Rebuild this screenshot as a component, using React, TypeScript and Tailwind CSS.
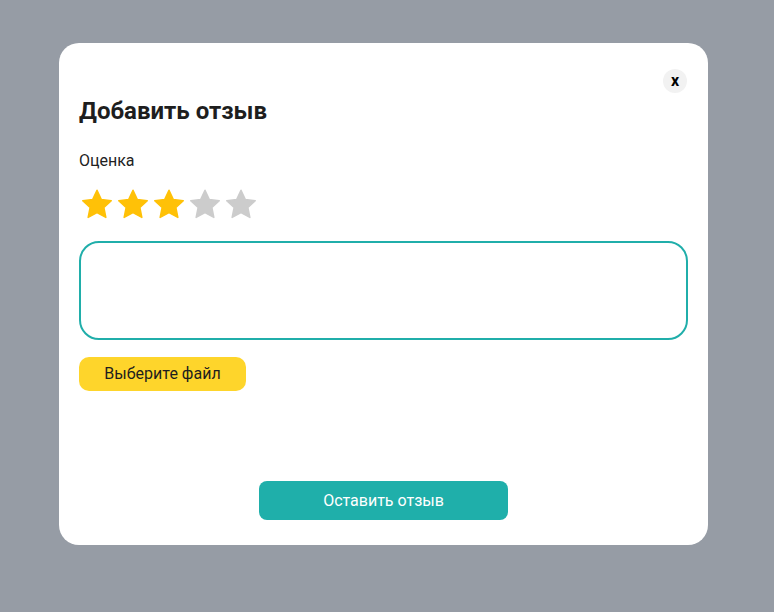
import React from "react";

const Star = ({ filled }: { filled: boolean }) => (
  <svg width="36" height="36" viewBox="0 0 24 24">
    <path
      d="M12 2.2l2.9 6.1 6.6.8-4.9 4.6 1.3 6.6L12 17.1l-5.9 3.2 1.3-6.6-4.9-4.6 6.6-.8z"
      fill={filled ? "#ffc107" : "#cccccc"}
      stroke={filled ? "#ffc107" : "#cccccc"}
      strokeWidth="1"
      strokeLinejoin="round"
    />
  </svg>
);

export default function App() {
  return (
    <div
      className="w-[774px] h-[612px] bg-[#969ca5] pl-[59px] pt-[43px]"
      style={{ fontFamily: "Roboto, 'Noto Sans', sans-serif" }}
    >
      <div className="relative w-[649px] h-[502px] bg-white rounded-[20px] px-[20px] pt-[52px] pb-[25px] flex flex-col">
        <button className="absolute top-[26px] right-[21px] w-[24px] h-[24px] rounded-full bg-[#f2f2f2] flex items-center justify-center text-[16px] font-bold text-black leading-none pb-[1px]">
          x
        </button>
        <h2 className="text-[24px] leading-[32px] font-bold text-[#1e1e1e]">Добавить отзыв</h2>
        <div className="mt-[22px] text-[16px] leading-[24px] text-[#222]">Оценка</div>
        <div className="mt-[14px] flex h-[36px]">
          <Star filled />
          <Star filled />
          <Star filled />
          <Star filled={false} />
          <Star filled={false} />
        </div>
        <textarea className="mt-[18px] h-[99px] w-full rounded-[20px] border-2 border-[#20aeaa] resize-none outline-none" />
        <button className="mt-[17px] w-[167px] h-[34px] rounded-[10px] bg-[#fed52b] text-[16px] text-[#1e1e1e] flex items-center justify-center">
          Выберите файл
        </button>
        <div className="flex-1" />
        <div className="flex justify-center">
          <button className="w-[249px] h-[39px] rounded-[8px] bg-[#1fafaa] text-white text-[16px] flex items-center justify-center">
            Оставить отзыв
          </button>
        </div>
      </div>
    </div>
  );
}
